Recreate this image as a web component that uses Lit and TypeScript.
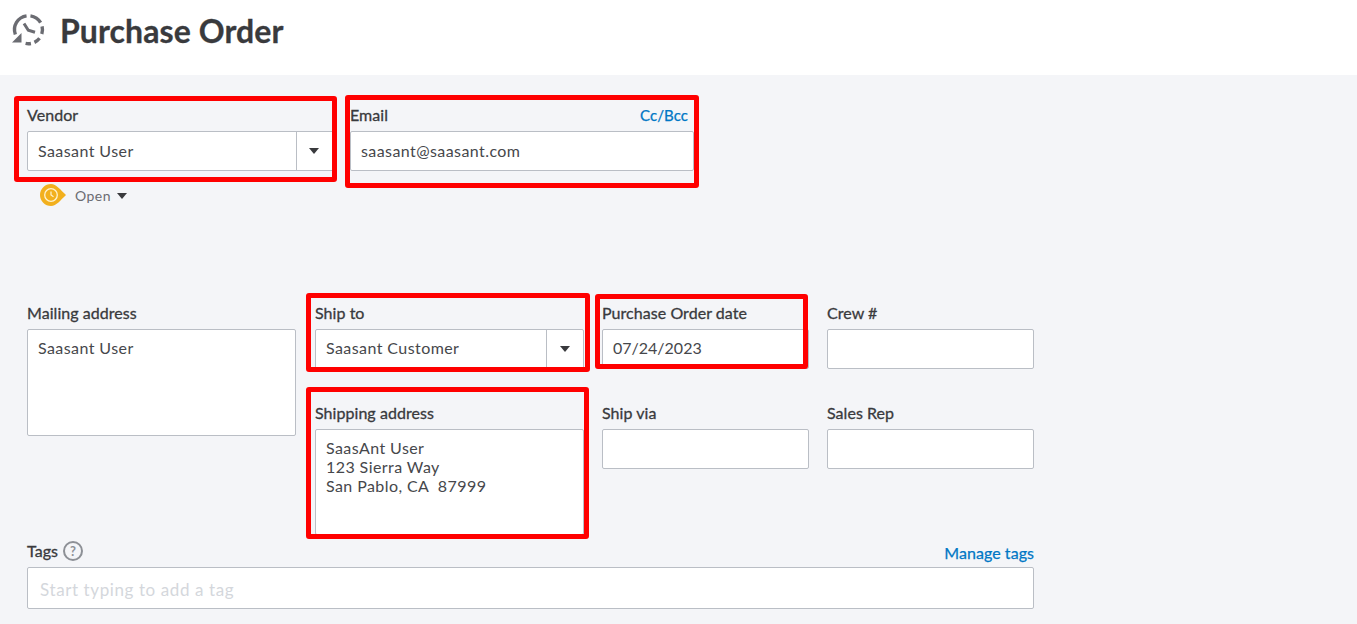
import { LitElement, html, css, svg } from "lit";
import { customElement } from "lit/decorators.js";

const arc = (a: number, b: number, r = 14, cx = 28.5, cy = 29.7) => {
  const p = (d: number) => {
    const t = ((d - 90) * Math.PI) / 180;
    return `${(cx + r * Math.cos(t)).toFixed(2)} ${(cy + r * Math.sin(t)).toFixed(2)}`;
  };
  return `M${p(a)}A${r} ${r} 0 ${b - a > 180 ? 1 : 0} 1 ${p(b)}`;
};

@customElement("app-root")
export class AppRoot extends LitElement {
  static styles = css`
    :host {
      display: block;
      height: 624px;
      overflow: hidden;
      background: #f4f5f8;
      font-family: Lato, "Open Sans", sans-serif;
      color: #393a3d;
    }
    * { box-sizing: border-box; }
    header {
      height: 75px;
      background: #fff;
      display: flex;
      align-items: flex-start;
      padding: 10px 0 0 9px;
      gap: 11px;
    }
    header svg { display: block; width: 40px; height: 40px; }
    h1 {
      margin: 1px 0 0;
      font-size: 32px;
      line-height: 40px;
      font-weight: 700;
      letter-spacing: 0.1px;
      color: #393a3d;
      -webkit-text-stroke: 0.3px #393a3d;
    }
    main { padding: 32px 0 0 27px; width: 1034px; }
    .top { display: flex; gap: 15px; }
    .field { position: relative; display: flex; flex-direction: column; }
    .vendor { width: 308px; }
    .email { width: 344px; }
    .label {
      height: 24px;
      font-size: 16px;
      line-height: 16px;
      font-weight: 400;
      letter-spacing: 0.05px;
      -webkit-text-stroke: 0.3px #393a3d;
      display: flex;
      justify-content: space-between;
      align-items: flex-start;
    }
    a { color: #0077c5; text-decoration: none; -webkit-text-stroke: 0.25px #0077c5; font-size: 16px; }
    .box {
      background: #fff;
      border: 1px solid #babec5;
      border-radius: 2px;
      height: 40px;
      font-size: 16px;
      line-height: 19px;
      padding: 9px 10px;
      color: #46474b;
      letter-spacing: 0.42px;
      font-weight: 400;
      white-space: pre-wrap;
    }
    .select { display: flex; padding: 0; }
    .select .value { flex: 1; padding: 9px 10px; }
    .caret {
      width: 38px;
      border-left: 1px solid #babec5;
      display: flex;
      align-items: center;
      justify-content: center;
      padding-right: 4px;
    }
    .tri {
      width: 0; height: 0;
      border-left: 5.5px solid transparent;
      border-right: 5.5px solid transparent;
      border-top: 6px solid #393a3d;
    }
    .email a { margin-right: 6px; font-size: 15px; }
    .status {
      display: flex;
      align-items: center;
      margin: 12px 0 0 12px;
      height: 24px;
      font-size: 14px;
      color: #6b6c72;
      letter-spacing: 0.45px;
    }
    .status svg { display: block; width: 28px; height: 24px; margin-right: 8px; }
    .status .tri { margin: 2px 0 0 6px; border-left-width: 5px; border-right-width: 5px; }
    .grid {
      margin-top: 98px;
      display: grid;
      grid-template-columns: 269px 270px 207px 207px;
      grid-template-rows: 64px 130px;
      column-gap: 18px;
      row-gap: 36px;
    }
    .mailing { grid-row: 1 / span 2; }
    .mailing .box { height: 107px; }
    .indent { margin-left: 1px; }
    .grid .box { padding-top: 8px; }
    .grid .select { padding-top: 0; }
    .grid .select .value { padding-top: 8px; }
    .grid .caret { width: 37px; padding-right: 1px; }
    .date { letter-spacing: 0; }
    .address { height: 106px; }
    .tags { margin-top: 4px; }
    .tags .label { height: 28px; }
    .tagname { display: flex; align-items: center; gap: 4px; padding-top: 1px; }
    .tags a { padding-top: 5px; line-height: 18px; }
    .help { display: block; width: 22px; height: 22px; }
    .tagbox { height: 42px; color: #d4d7dc; padding: 12px; font-size: 17px; letter-spacing: 0.6px; }
    .mark {
      position: absolute;
      border: 5px solid #f00;
      border-radius: 3px;
      pointer-events: none;
    }
    .m-vendor { top: -11px; left: -13px; right: -2px; bottom: -11px; }
    .m-email { top: -12px; left: -5px; right: -5px; bottom: -17px; }
    .m-shipto { top: -12px; left: -9px; right: -6px; bottom: -3px; }
    .m-date { top: -11px; left: -7px; right: 1px; bottom: 0; }
    .m-addr { top: -18px; left: -9px; right: -5px; bottom: -4px; }
  `;

  render() {
    return html`
      <header>
        <svg viewBox="9 10 40 40" fill="none" stroke="#6b6c72" stroke-width="3.4">
          ${svg`<path d=${arc(250, 352)} />
          <path d=${arc(8, 60)} />
          <path d=${arc(76, 108)} />
          <path d=${arc(128, 155)} />
          <path d=${arc(170, 192)} />`}
          <path d="M24 23.500l4.300 6.800 6.700 2" stroke-width="3" />
          <path d="M12 42.500h9.500v-9.500z" fill="#6b6c72" stroke="none" />
        </svg>
        <h1>Purchase Order</h1>
      </header>
      <main>
        <div class="top">
          <div class="field vendor">
            <div class="label">Vendor</div>
            <div class="box select"><div class="value">Saasant User</div><div class="caret"><div class="tri"></div></div></div>
            <div class="mark m-vendor"></div>
          </div>
          <div class="field email">
            <div class="label"><span>Email</span><a href="#">Cc/Bcc</a></div>
            <div class="box">saasant@saasant.com</div>
            <div class="mark m-email"></div>
          </div>
        </div>
        <div class="status">
          <svg viewBox="0 0 28 24">
            <path d="M12 1c5.500 0 9.500 6 15 11c-5.500 5-9.500 11-15 11a11 11 0 0 1 0-22z" fill="#f2b01e" />
            <circle cx="12" cy="12" r="6.300" fill="none" stroke="#fff3cf" stroke-width="1.300" />
            <path d="M12 8.500V12l2.500 1.800" fill="none" stroke="#fff3cf" stroke-width="1.200" />
          </svg>
          <span>Open</span><div class="tri"></div>
        </div>
        <div class="grid">
          <div class="field mailing">
            <div class="label">Mailing address</div>
            <div class="box">Saasant User</div>
          </div>
          <div class="field indent">
            <div class="label">Ship to</div>
            <div class="box select"><div class="value">Saasant Customer</div><div class="caret"><div class="tri"></div></div></div>
            <div class="mark m-shipto"></div>
          </div>
          <div class="field">
            <div class="label">Purchase Order date</div>
            <div class="box date">07/24/2023</div>
            <div class="mark m-date"></div>
          </div>
          <div class="field">
            <div class="label">Crew #</div>
            <div class="box"></div>
          </div>
          <div class="field indent">
            <div class="label">Shipping address</div>
            <div class="box address">SaasAnt User
123 Sierra Way
San Pablo, CA  87999</div>
            <div class="mark m-addr"></div>
          </div>
          <div class="field">
            <div class="label">Ship via</div>
            <div class="box"></div>
          </div>
          <div class="field">
            <div class="label">Sales Rep</div>
            <div class="box"></div>
          </div>
        </div>
        <div class="field tags">
          <div class="label">
            <span class="tagname">Tags
              <svg class="help" viewBox="0 0 22 22">
                <circle cx="11" cy="11" r="9" fill="none" stroke="#8d9096" stroke-width="2" />
                <text x="11" y="15.500" text-anchor="middle" font-size="13" font-weight="700" fill="#8d9096">?</text>
              </svg>
            </span>
            <a href="#">Manage tags</a>
          </div>
          <div class="box tagbox">Start typing to add a tag</div>
        </div>
      </main>
    `;
  }
}
